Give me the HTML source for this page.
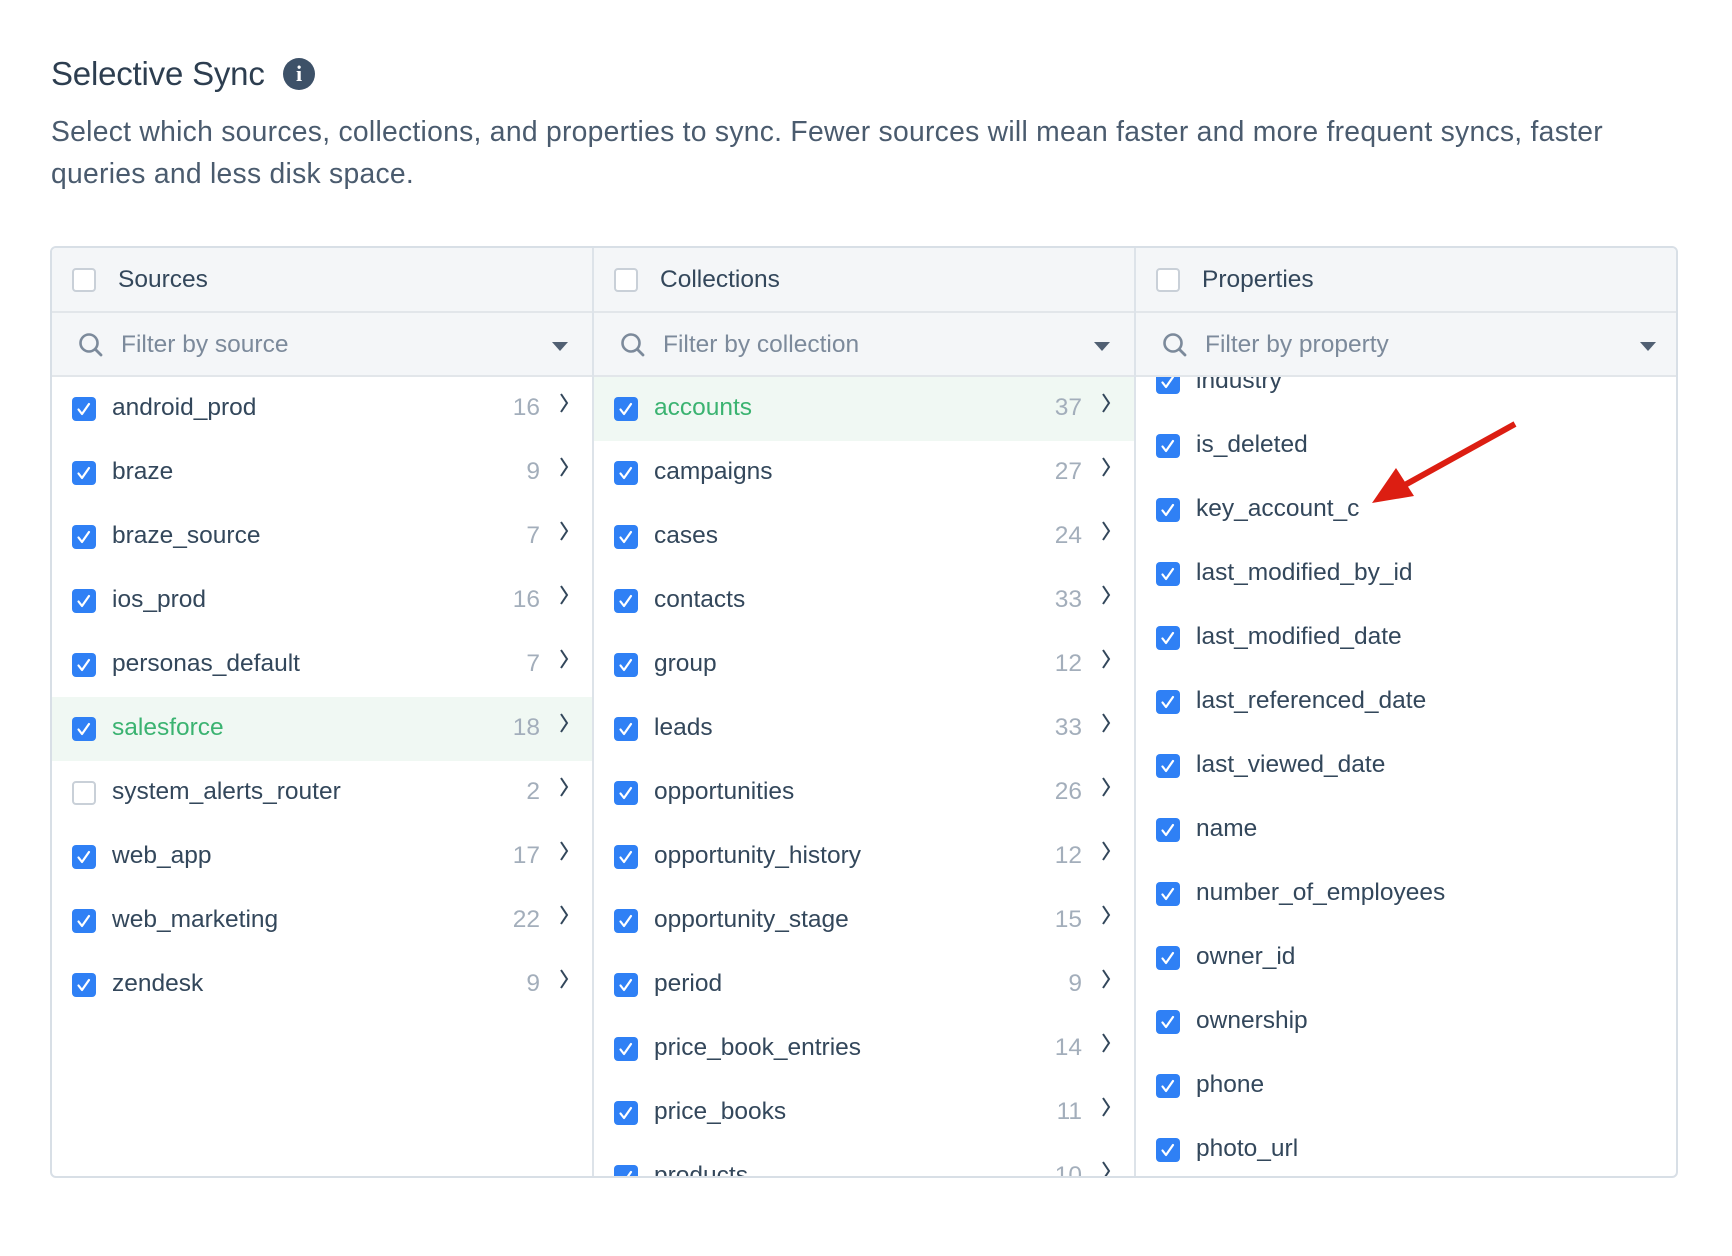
<!DOCTYPE html>
<html><head><meta charset="utf-8"><style>
*{box-sizing:border-box;margin:0;padding:0}
body{width:1732px;height:1256px;background:#fff;font-family:"Liberation Sans",sans-serif;color:#33475b;position:relative;overflow:hidden}
h1{position:absolute;left:51px;top:55px;font-size:33px;font-weight:normal;color:#2d3e50;letter-spacing:-0.2px}
.info{position:absolute;left:283px;top:58px;width:32px;height:32px;border-radius:50%;background:#3d5168;color:#fff;font:bold 22px "Liberation Serif",serif;text-align:center;line-height:32px}
.desc{position:absolute;left:51px;top:110px;width:1640px;font-size:28.3px;line-height:42px;color:#4a5b6e;letter-spacing:0.27px}
.tbl{position:absolute;left:50px;top:246px;width:1628px;height:932px;border:2px solid #d8dfe6;border-radius:6px;overflow:hidden}
.col{position:absolute;top:0;height:100%;border-right:2px solid #dde3e9}
.hd{height:65px;background:#f4f6f8;border-bottom:2px solid #e2e6ea;position:relative}
.hd span{position:absolute;left:66px;top:18px;font-size:24.5px;color:#33475b}
.flt{height:64px;background:#f4f6f8;border-bottom:2px solid #e2e6ea;position:relative}
.flt span{position:absolute;left:69px;top:18px;font-size:24.5px;color:#7c8a9b}
.flt .tri{position:absolute;right:24px;top:29px;width:0;height:0;border-left:8px solid transparent;border-right:8px solid transparent;border-top:9px solid #516073}
.flt svg{position:absolute;left:26px;top:19px}
.cb{position:absolute;left:20px;width:24px;height:24px;border-radius:4px;background:#2f80f5}
.cb.u{background:#fff;border:2px solid #c9d0d8}
.hd .cb{top:20px}
.list{position:absolute;top:129px;left:0;right:0;bottom:0;overflow:hidden}
.row{height:64px;position:relative}
.row .cb{top:20px}
.row .t{position:absolute;left:60px;top:17px;font-size:24.5px;color:#33475b}
.row .n{position:absolute;right:52px;top:17px;font-size:24.5px;color:#a3aebb}
.row .ch{position:absolute;right:22px;top:14px}
.row.g{background:#f0f8f3}
.row.g .t{color:#3bb371}
</style></head><body>
<h1>Selective Sync</h1><div class="info">i</div>
<div class="desc">Select which sources, collections, and properties to sync. Fewer sources will mean faster and more frequent syncs, faster<br>queries and less disk space.</div>
<div class="tbl">
<svg width="0" height="0" style="position:absolute"><defs>
<symbol id="ck" viewBox="0 0 24 24"><path d="M6.5 12.5l3.5 4.5 7-10" fill="none" stroke="#fff" stroke-width="2.2" stroke-linecap="round" stroke-linejoin="round"/></symbol>
<symbol id="chev" viewBox="0 0 12 24"><path d="M3 3l6 9-6 9" fill="none" stroke="#33475b" stroke-width="2"/></symbol>
<symbol id="mag" viewBox="0 0 26 26"><circle cx="11" cy="11" r="8.5" fill="none" stroke="#7c8a9b" stroke-width="2.6"/><path d="M17.5 17.5l5.5 5.5" stroke="#7c8a9b" stroke-width="2.8" stroke-linecap="round"/></symbol>
</defs></svg>
COLS
</div>
<svg style="position:absolute;left:0;top:0" width="1732" height="1256"><path d="M1515 424 L1403 486" stroke="#dc1e12" stroke-width="6"/><path d="M1372 503 L1396 468 L1414 496 Z" fill="#dc1e12"/></svg>
<script>
function cb(c){return c?'<div class="cb"><svg width="24" height="24"><use href="#ck"/></svg></div>':'<div class="cb u"></div>'}
function col(left,w,title,ph,rows,off,counts){
 let h='<div class="col" style="left:'+left+'px;width:'+w+'px"><div class="hd"><div class="cb u"></div><span>'+title+'</span></div><div class="flt"><svg width="26" height="26"><use href="#mag"/></svg><span>'+ph+'</span><div class="tri"></div></div><div class="list"><div style="margin-top:'+off+'px">';
 rows.forEach(r=>{h+='<div class="row'+(r[2]?' g':'')+'">'+cb(r[3]!==0)+'<div class="t">'+r[0]+'</div>'+(counts?'<div class="n">'+r[1]+'</div><svg class="ch" width="12" height="24"><use href="#chev"/></svg>':'')+'</div>'});
 return h+'</div></div></div>';
}
const s=[["android_prod",16],["braze",9],["braze_source",7],["ios_prod",16],["personas_default",7],["salesforce",18,1],["system_alerts_router",2,0,0],["web_app",17],["web_marketing",22],["zendesk",9]];
const c=[["accounts",37,1],["campaigns",27],["cases",24],["contacts",33],["group",12],["leads",33],["opportunities",26],["opportunity_history",12],["opportunity_stage",15],["period",9],["price_book_entries",14],["price_books",11],["products",10]];
const p=["industry","is_deleted","key_account_c","last_modified_by_id","last_modified_date","last_referenced_date","last_viewed_date","name","number_of_employees","owner_id","ownership","phone","photo_url"].map(x=>[x,""]);
document.querySelector('.tbl').innerHTML=document.querySelector('.tbl').innerHTML.replace('COLS',col(0,542,'Sources','Filter by source',s,0,1)+col(542,542,'Collections','Filter by collection',c,0,1)+col(1084,544,'Properties','Filter by property',p,-27,0));
document.querySelectorAll('.col')[2].style.borderRight='none';
</script>
</body></html>
